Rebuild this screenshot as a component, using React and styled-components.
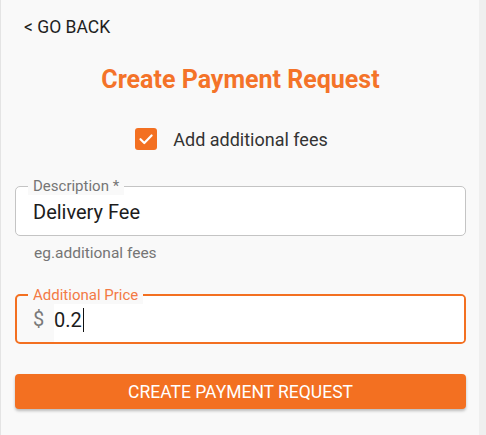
import React from "react";
import styled, { createGlobalStyle } from "styled-components";

const Global = createGlobalStyle`
  html, body { margin: 0; padding: 0; background: #efefef; }
  body { font-family: Roboto, "Noto Sans", sans-serif; }
  * { box-sizing: border-box; }
`;

const Shell = styled.div`
  display: flex;
  width: 486px;
  height: 435px;
  overflow: hidden;
`;

const Panel = styled.div`
  width: 479px;
  height: 435px;
  background: #f9f9f9;
  border-left: 1px solid #e4e4e4;
  padding: 16px 13px 0 14px;
  display: flex;
  flex-direction: column;
`;

const Track = styled.div`
  flex: 1;
  background: #efefef;
`;

const BackLink = styled.a`
  align-self: flex-start;
  margin-left: 9px;
  font-size: 17.5px;
  line-height: 22px;
  color: #1f1f1f;
  text-decoration: none;
  cursor: pointer;
`;

const Title = styled.h1`
  margin: 27px 0 0;
  text-align: center;
  font-size: 25px;
  line-height: 30px;
  font-weight: 700;
  color: #f47329;
`;

const CheckRow = styled.label`
  display: flex;
  align-items: center;
  justify-content: center;
  gap: 16px;
  height: 24px;
  margin-top: 32px;
  font-size: 18px;
  color: #333;
  padding-right: 18px;
`;

const Box = styled.span`
  width: 22px;
  height: 22px;
  border-radius: 3px;
  background: #f37021;
  display: flex;
  align-items: center;
  justify-content: center;
`;

const Outline = styled.div`
  position: relative;
  margin-top: ${(p) => p.$mt}px;
  height: 50px;
  flex: none;
  border: ${(p) => (p.$focused ? "2px solid #f37021" : "1px solid #c4c4c4")};
  border-radius: 5px;
  background: ${(p) => (p.$focused ? "transparent" : "#fff")};
  display: flex;
  align-items: center;
  padding-left: ${(p) => (p.$focused ? 16 : 17)}px;
`;

const Legend = styled.span`
  position: absolute;
  top: -10px;
  left: ${(p) => (p.$focused ? 11 : 12)}px;
  padding: 0 5px;
  font-size: 15px;
  line-height: 18px;
  color: ${(p) => (p.$focused ? "#f37a45" : "#757575")};
  background: #f9f9f9;
`;

const Value = styled.span`
  font-size: 20px;
  color: #1c1c1c;
  padding-top: 1px;
`;

const Adorn = styled.span`
  font-size: 20px;
  color: #7a7a7a;
  width: 21px;
`;

const InputFill = styled.div`
  flex: 1;
  align-self: stretch;
  background: #fff;
  display: flex;
  align-items: center;
  border-radius: 0 3px 3px 0;
`;

const Caret = styled.span`
  display: inline-block;
  width: 1.5px;
  height: 24px;
  background: #111;
  margin-left: 1px;
  vertical-align: -5px;
`;

const Helper = styled.div`
  margin: 8px 0 0 19px;
  font-size: 15.5px;
  line-height: 18px;
  color: #757575;
`;

const Button = styled.button`
  margin-top: 30px;
  height: 35px;
  flex: none;
  border: none;
  border-radius: 4px;
  background: #f37021;
  color: #fff;
  font-family: Roboto, sans-serif;
  font-size: 17.5px;
  font-weight: 400;
  box-shadow: 0 2px 3px rgba(0, 0, 0, 0.25);
  cursor: pointer;
`;

export default function App() {
  return (
    <Shell>
      <Global />
      <Panel>
        <BackLink>&lt; GO BACK</BackLink>
        <Title>Create Payment Request</Title>
        <CheckRow>
          <Box>
            <svg width="16" height="16" viewBox="0 0 16 16">
              <path d="M2.5 8.2 L6.3 12 L13.6 4.5" fill="none" stroke="#fff" strokeWidth="2.2" strokeLinecap="round" strokeLinejoin="round" />
            </svg>
          </Box>
          Add additional fees
        </CheckRow>
        <Outline $mt={35}>
          <Legend>Description *</Legend>
          <Value>Delivery Fee</Value>
        </Outline>
        <Helper>eg.additional fees</Helper>
        <Outline $mt={32} $focused>
          <Legend $focused>Additional Price</Legend>
          <Adorn>$</Adorn>
          <InputFill>
            <Value>
              0.2<Caret />
            </Value>
          </InputFill>
        </Outline>
        <Button>CREATE PAYMENT REQUEST</Button>
      </Panel>
      <Track />
    </Shell>
  );
}
